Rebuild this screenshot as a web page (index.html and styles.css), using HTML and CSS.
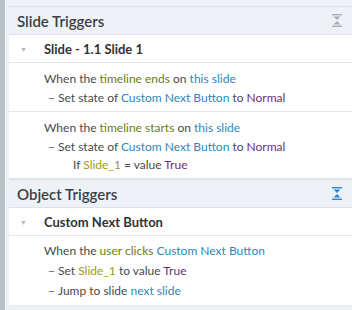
FILE: index.html
```html
<!DOCTYPE html>
<html lang="en">
<head>
<meta charset="UTF-8">
<title>Triggers</title>
<link rel="stylesheet" href="styles.css">
</head>
<body>
<div class="frame">
<div class="edge"></div>
<div class="panel">

<!-- Slide triggers -->
<div class="section-head">
<span>Slide Triggers</span>
<svg class="collapse" width="10" height="13" viewBox="0 0 10 13"><rect x="0" y="0" width="10" height="1.4"/><path d="M1.5 2.5h7L5 6z"/><path d="M1.5 10.5h7L5 7z"/><rect x="0" y="11.6" width="10" height="1.4"/></svg>
</div>
<div class="group-head"><span class="caret">&#9660;</span>Slide - 1.1 Slide 1</div>
<div class="trigger">
<div>When the <span class="ev">timeline</span> <span class="ev">ends</span> on <span class="obj">this slide</span></div>
<div class="act"><span class="dash">&minus;</span>Set state of <span class="obj">Custom Next Button</span> to <span class="val">Normal</span></div>
</div>
<div class="trigger">
<div>When the <span class="ev">timeline</span> <span class="ev">starts</span> on <span class="obj">this slide</span></div>
<div class="act"><span class="dash">&minus;</span>Set state of <span class="obj">Custom Next Button</span> to <span class="val">Normal</span></div>
<div class="cond">If <span class="var">Slide_1</span> = value <span class="val">True</span></div>
</div>

<!-- Object triggers -->
<div class="section-head">
<span>Object Triggers</span>
<svg class="collapse blue" width="10" height="13" viewBox="0 0 10 13"><rect x="0" y="0" width="10" height="1.4"/><path d="M1.5 2.5h7L5 6z"/><path d="M1.5 10.5h7L5 7z"/><rect x="0" y="11.6" width="10" height="1.4"/></svg>
</div>
<div class="group-head"><span class="caret">&#9660;</span>Custom Next Button</div>
<div class="trigger last">
<div>When the <span class="ev">user clicks</span> <span class="obj">Custom Next Button</span></div>
<div class="act"><span class="dash">&minus;</span>Set <span class="var">Slide_1</span> to value <span class="val">True</span></div>
<div class="act"><span class="dash">&minus;</span>Jump to slide <span class="obj">next slide</span></div>
</div>

</div>
</div>
</body>
</html>
```

FILE: styles.css
```css
body {
    margin: 0;
    font-family: Lato, "Open Sans", sans-serif;
    background: #eef2f6;
}

.frame {
    display: flex;
    height: 310px;
    overflow: hidden;
}

.edge {
    width: 5px;
    flex: none;
    background: #b9c0c8;
    margin-right: 4px;
}

.panel {
    flex: 1;
    padding-top: 6px;
}

/* Section header */
.section-head {
    display: flex;
    align-items: center;
    justify-content: space-between;
    height: 27px;
    padding: 0 10px 0 8px;
    background: #eef2f6;
    border-top: 1px solid #dde2e8;
    border-bottom: 1px solid #dde2e8;
    font-size: 15px;
    font-weight: 600;
    color: #3a3f45;
}

.collapse {
    fill: #a8aeb4;
}

.collapse.blue {
    fill: #2c8ad8;
}

/* Group row */
.group-head {
    display: flex;
    align-items: center;
    height: 27px;
    background: #fff;
    border-bottom: 1px solid #e3e6ea;
    font-size: 13px;
    font-weight: 700;
    color: #333;
}

.caret {
    width: 35px;
    padding-left: 11px;
    box-sizing: border-box;
    font-size: 7px;
    color: #b3b8be;
}

/* Trigger lines */
.trigger {
    background: #fff;
    padding: 6px 0 4px 35px;
    border-bottom: 1px solid #e3e6ea;
    font-size: 12px;
    line-height: 19px;
    color: #4a4a4a;
}

.trigger.last {
    padding-top: 5px;
    line-height: 20px;
}

.act {
    padding-left: 4px;
}

.dash {
    display: inline-block;
    width: 10px;
    color: #666;
}

.cond {
    padding-left: 29px;
    line-height: 18px;
}

.ev { color: #6b7d16; }
.obj { color: #2d87bd; }
.val { color: #6a2f78; }
.var { color: #a09a12; }
```
